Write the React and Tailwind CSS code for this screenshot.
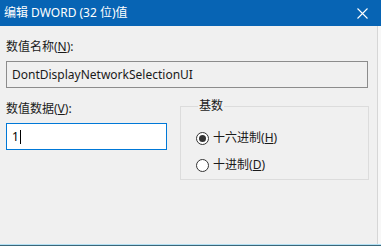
import React from "react";

const font = { fontFamily: '"Noto Sans", "Noto Sans CJK SC", sans-serif' };

function Radio({ checked, label, mnemonic }) {
  return (
    <div className="flex items-center h-[16px]">
      <div className="w-[13px] h-[13px] rounded-full border border-[#333333] bg-white flex items-center justify-center">
        {checked && <div className="w-[7px] h-[7px] rounded-full bg-[#333333]" />}
      </div>
      <span className="ml-[4px] text-[12px] leading-[16px] text-[#1a1a1a]">
        {label}(<span className="underline">{mnemonic}</span>)
      </span>
    </div>
  );
}

export default function App() {
  return (
    <div
      className="w-[381px] h-[246px] bg-[#f0f0f0] flex flex-col overflow-hidden"
      style={font}
    >
      <div className="h-[26px] bg-[#0764b4] flex items-center justify-between pl-[4px] pr-[13px] shrink-0">
        <span className="text-white text-[12px] leading-[16px]">编辑 DWORD (32 位)值</span>
        <svg width="11" height="11" viewBox="0 0 11 11" className="mt-[1px]">
          <path d="M0.5 0.5 L10.5 10.5 M10.5 0.5 L0.5 10.5" stroke="white" strokeWidth="1.1" fill="none" />
        </svg>
      </div>
      <div className="flex flex-1 min-h-0">
        <div className="flex-1 flex flex-col pl-[6px] pr-[8px]">
          <div className="mt-[13px] h-[16px] text-[12px] leading-[16px] text-[#1a1a1a]">
            数值名称(<span className="underline">N</span>):
          </div>
          <div className="mt-[6px] h-[27px] w-[362px] border border-[#8c8c8c] bg-[#f0f0f0] flex items-center pl-[5px] text-[12px] leading-[16px] text-[#1a1a1a]">
            DontDisplayNetworkSelectionUI
          </div>
          <div className="flex mt-[10px]">
            <div className="flex flex-col w-[174px]">
              <div className="mt-[3px] h-[16px] text-[12px] leading-[16px] text-[#1a1a1a]">
                数值数据(<span className="underline">V</span>):
              </div>
              <div className="mt-[6px] h-[27px] w-[161px] border border-[#0078d7] bg-white flex items-center pl-[5px] text-[12px] leading-[16px] text-black">
                <span>1</span>
                <span className="ml-[1px] w-[1px] h-[14px] bg-black" />
              </div>
            </div>
            <fieldset className="w-[189px] h-[82px] border border-[#dcdcdc] rounded-none pl-[15px] pt-[16px]">
              <legend className="ml-[2px] px-[1px] text-[12px] leading-[16px] text-[#1a1a1a]">基数</legend>
              <div className="flex flex-col gap-[11px]">
                <Radio checked label="十六进制" mnemonic="H" />
                <Radio label="十进制" mnemonic="D" />
              </div>
            </fieldset>
          </div>
        </div>
        <div className="w-[1px] bg-[#d6d6d6]" />
        <div className="w-[4px] bg-[#f7f7f7]" />
      </div>
      <div className="h-[1px] bg-[#b2e0f4] shrink-0" />
      <div className="h-[1px] bg-[#3b6779] shrink-0" />
    </div>
  );
}
